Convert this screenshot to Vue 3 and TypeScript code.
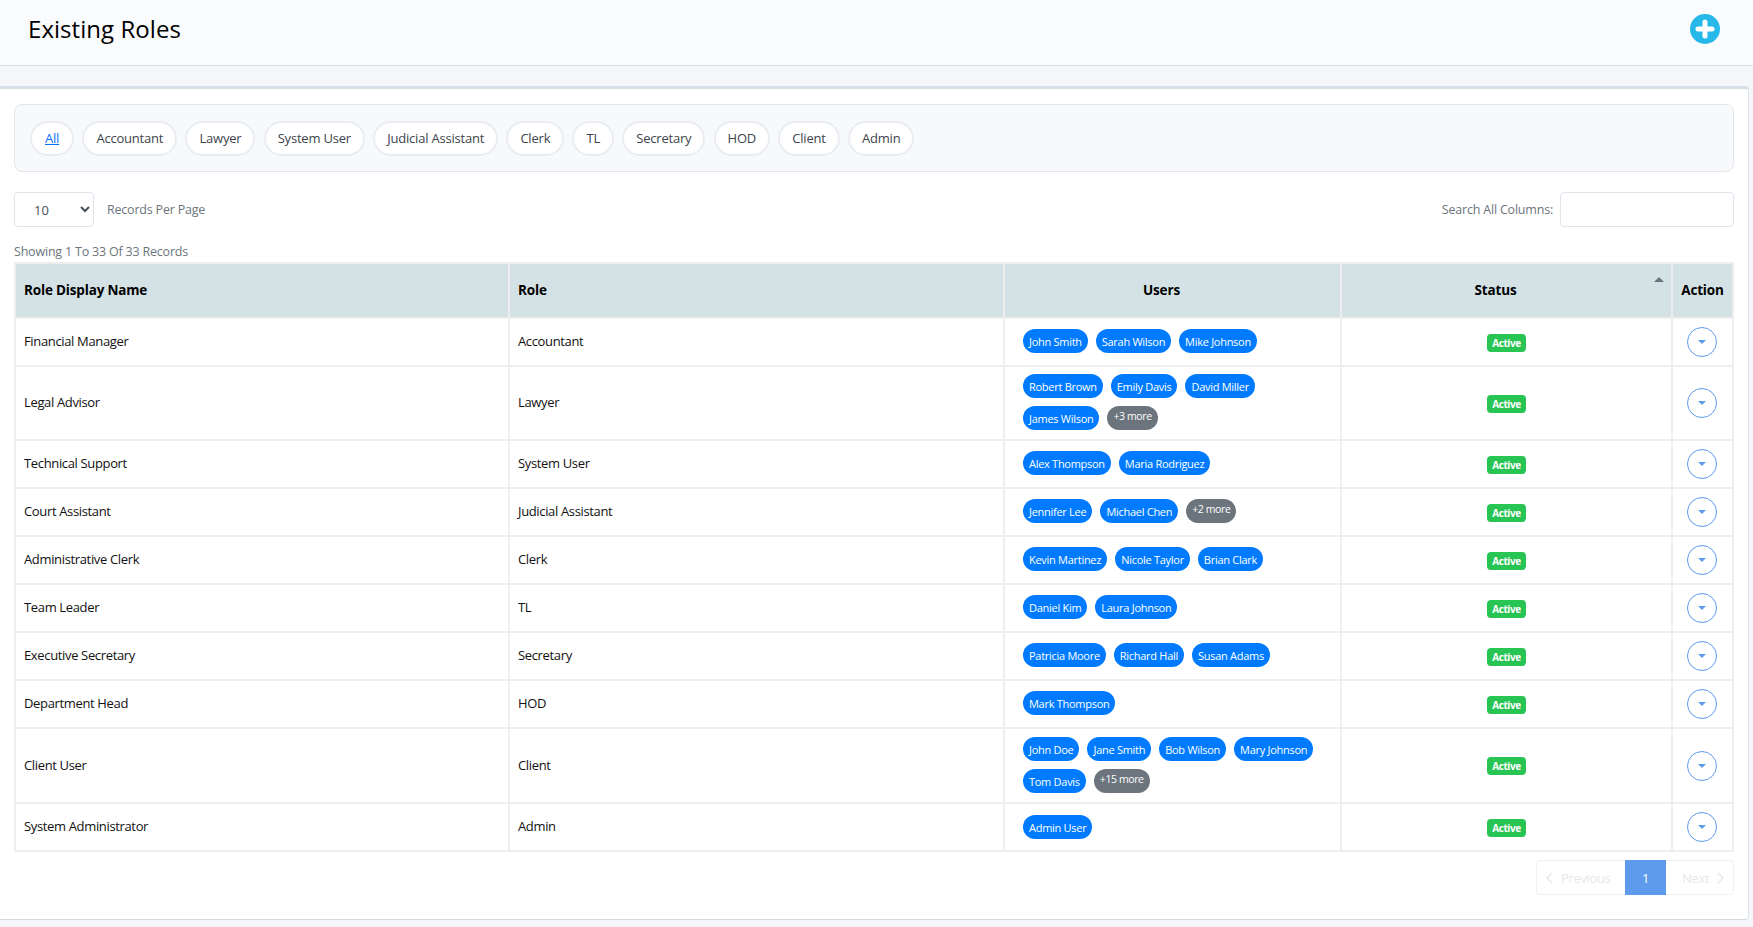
<script setup lang="ts">
interface RoleRow {
  name: string
  role: string
  users: string[]
  more?: string
}

const filters: string[] = ['Accountant', 'Lawyer', 'System User', 'Judicial Assistant', 'Clerk', 'TL', 'Secretary', 'HOD', 'Client', 'Admin']

const rows: RoleRow[] = [
  { name: 'Financial Manager', role: 'Accountant', users: ['John Smith', 'Sarah Wilson', 'Mike Johnson'] },
  { name: 'Legal Advisor', role: 'Lawyer', users: ['Robert Brown', 'Emily Davis', 'David Miller', 'James Wilson'], more: '+3 more' },
  { name: 'Technical Support', role: 'System User', users: ['Alex Thompson', 'Maria Rodriguez'] },
  { name: 'Court Assistant', role: 'Judicial Assistant', users: ['Jennifer Lee', 'Michael Chen'], more: '+2 more' },
  { name: 'Administrative Clerk', role: 'Clerk', users: ['Kevin Martinez', 'Nicole Taylor', 'Brian Clark'] },
  { name: 'Team Leader', role: 'TL', users: ['Daniel Kim', 'Laura Johnson'] },
  { name: 'Executive Secretary', role: 'Secretary', users: ['Patricia Moore', 'Richard Hall', 'Susan Adams'] },
  { name: 'Department Head', role: 'HOD', users: ['Mark Thompson'] },
  { name: 'Client User', role: 'Client', users: ['John Doe', 'Jane Smith', 'Bob Wilson', 'Mary Johnson', 'Tom Davis'], more: '+15 more' },
  { name: 'System Administrator', role: 'Admin', users: ['Admin User'] },
]
</script>

<template>
  <div class="page">
    <header class="topbar">
      <h1 class="title">Existing Roles</h1>
      <button class="add" type="button" aria-label="Add role">
        <svg width="30" height="30" viewBox="0 0 30 30">
          <circle cx="15" cy="15" r="15" fill="#25b8e8" />
          <path d="M15 8v14M8 15h14" stroke="#fff" stroke-width="5" stroke-linecap="round" fill="none" />
        </svg>
      </button>
    </header>

    <main class="card">
      <nav class="filters">
        <a class="pill active" href="#">All</a>
        <a v-for="f in filters" :key="f" class="pill" href="#">{{ f }}</a>
      </nav>

      <div class="controls">
        <div class="length">
          <select class="select">
            <option>10</option>
            <option>25</option>
            <option>50</option>
          </select>
          <span class="muted">Records Per Page</span>
        </div>
        <label class="search">
          <span class="muted">Search All Columns:</span>
          <input class="input" type="text" />
        </label>
      </div>

      <div class="info">Showing 1 To 33 Of 33 Records</div>

      <table class="table">
        <colgroup>
          <col class="c1" />
          <col class="c2" />
          <col class="c3" />
          <col class="c4" />
          <col class="c5" />
        </colgroup>
        <thead>
          <tr>
            <th>Role Display Name</th>
            <th>Role</th>
            <th class="center pad">Users</th>
            <th class="center pad sort">Status<i class="caret-up"></i></th>
            <th class="center">Action</th>
          </tr>
        </thead>
        <tbody>
          <tr v-for="r in rows" :key="r.name">
            <td>{{ r.name }}</td>
            <td>{{ r.role }}</td>
            <td class="users">
              <div class="chips">
                <span v-for="u in r.users" :key="u" class="chip">{{ u }}</span>
                <span v-if="r.more" class="chip more">{{ r.more }}</span>
              </div>
            </td>
            <td class="center"><span class="status">Active</span></td>
            <td class="center act-cell">
              <button class="act" type="button" aria-label="Actions"><i class="caret-down"></i></button>
            </td>
          </tr>
        </tbody>
      </table>

      <div class="pager-row">
        <div class="pager">
          <span class="pg prev">
            <svg width="7" height="12" viewBox="0 0 7 12"><path d="M6 1 1 6l5 5" fill="none" stroke="currentColor" stroke-width="1.4" /></svg>
            Previous
          </span>
          <span class="pg cur">1</span>
          <span class="pg next">
            Next
            <svg width="7" height="12" viewBox="0 0 7 12"><path d="m1 1 5 5-5 5" fill="none" stroke="currentColor" stroke-width="1.4" /></svg>
          </span>
        </div>
      </div>
    </main>
  </div>
</template>

<style>
html, body { margin: 0; background: #f4f6fa; }
</style>

<style scoped>
.page {
  min-height: 927px;
  background: #f4f6fa;
  font-family: "Open Sans", "Noto Sans", sans-serif;
  font-size: 13px;
  letter-spacing: -0.2px;
  color: #212529;
  box-sizing: border-box;
}
.topbar {
  background: #fafbfd;
  border-bottom: 1px solid #d8e0e6;
  display: flex;
  align-items: center;
  justify-content: space-between;
  padding: 0 33px 7px 28px;
  height: 58px;
}
.title { margin: 0; font-size: 24px; font-weight: 400; color: #000; letter-spacing: 0.05px; position: relative; top: -1px; }
.add { padding: 0; border: 0; background: none; display: block; height: 30px; }
.card {
  margin: 20px 4px 8px 0;
  background: #fff;
  border-top: 3px solid #d5e0e6;
  border-right: 1px solid #dfe4ea;
  border-bottom: 1px solid #d5dae2;
  border-radius: 0 4px 4px 0;
  padding: 15px 14px 24px 14px;
  height: 834px;
  box-sizing: border-box;
}
.filters {
  display: flex;
  gap: 8.2px;
  height: 35px;
  background: #f8f9fb;
  border: 1px solid #e2e6ec;
  border-radius: 8px;
  margin-bottom: 20px;
  padding: 15.5px 15px;
}
.pill {
  display: flex;
  align-items: center;
  height: 35px;
  padding: 0 12px;
  box-sizing: border-box;
  border: 2px solid #e9edf2;
  border-radius: 18px;
  background: #fff;
  color: #3d444b;
  font-weight: 500;
  text-decoration: none;
}
.pill.active { color: #0d6efd; text-decoration: underline; padding: 0 13px; }
.controls { display: flex; justify-content: space-between; align-items: center; height: 35px; }
.length, .search { display: flex; align-items: center; }
.muted { color: #6c757d; font-size: 12.5px; }
.select {
  width: 80px;
  height: 35px;
  margin-right: 13px;
  padding: 0 15px;
  background: #fff;
  border: 1px solid #dfe5ec;
  border-radius: 4px;
  color: #495057;
  font: inherit;
}
.input {
  width: 174px;
  height: 35px;
  margin-left: 7px;
  box-sizing: border-box;
  background: #fff;
  border: 1px solid #dfe5ec;
  border-radius: 4px;
}
.info { color: #6c757d; font-size: 12.5px; height: 18px; line-height: 18px; margin-top: 16px; margin-bottom: 1px; }
.table {
  width: 1720px;
  table-layout: fixed;
  border-collapse: collapse;
  border: 2px solid #eeeeee;
  background: #fff;
}
.c1 { width: 494px; }
.c2 { width: 495px; }
.c3 { width: 337px; }
.c4 { width: 331px; }
.c5 { width: 61px; }
th, td {
  border: 2px solid #eeeeee;
  padding: 0 8px 2px;
  text-align: left;
  vertical-align: middle;
  height: 48px;
  box-sizing: border-box;
  letter-spacing: -0.35px;
  color: #111;
}
th { background: #d4e2e6; font-weight: 700; font-size: 13.5px; letter-spacing: -0.17px; color: #000; height: 55px; }
th.center, td.center { text-align: center; }
th.pad { padding-right: 30px; }
td.act-cell { padding-bottom: 0; }
.sort { position: relative; }
.caret-up {
  position: absolute;
  top: 13px;
  right: 7px;
  border: 5px solid transparent;
  border-top: 0;
  border-bottom: 5px solid #6c757d;
}
td.users { padding: 7px 18px 9px; }
tr:nth-child(9) td.users { padding: 8px 18px 9px; }
tr:last-child td.users { padding: 8px 18px 8px; }
.chips { display: flex; flex-wrap: wrap; gap: 8px; }
.chip {
  display: inline-flex;
  align-items: center;
  box-sizing: border-box;
  height: 24px;
  padding: 0 6px;
  border-radius: 12px;
  background: #007bff;
  color: #fff;
  font-size: 11px;
  letter-spacing: -0.28px;
}
.chip.more {
  background: #6c757d;
  font-size: 10.5px;
  letter-spacing: -0.4px;
  padding: 0 6px 5px;
}
.status {
  display: inline-block;
  position: relative;
  top: 1px;
  height: 18px;
  line-height: 18px;
  padding: 0 5.5px;
  border-radius: 4px;
  background: #28c454;
  color: #fff;
  font-size: 10px;
  font-weight: 700;
  letter-spacing: -0.4px;
  vertical-align: middle;
}
.act {
  width: 30px;
  height: 30px;
  margin-right: 1px;
  padding: 0;
  border: 1px solid #5e9bec;
  border-radius: 50%;
  background: #fff;
  display: inline-flex;
  align-items: center;
  justify-content: center;
  vertical-align: middle;
}
.caret-down {
  border: 4px solid transparent;
  border-bottom: 0;
  border-top: 4px solid #5e9bec;
}
.pager-row { display: flex; justify-content: flex-end; margin-top: 8px; }
.pager {
  display: flex;
  height: 35px;
  box-sizing: border-box;
  border: 1px solid #eef0f3;
  border-radius: 4px;
  font-size: 13px;
  letter-spacing: -0.35px;
  color: #e3e8ec;
}
.pg { display: flex; align-items: center; gap: 8px; }
.prev { width: 88px; padding-left: 9px; box-sizing: border-box; }
.next { width: 67px; padding-left: 16px; box-sizing: border-box; }
.cur { width: 41px; margin: -1px 0; justify-content: center; background: #5e9bec; color: #fff; }
</style>
